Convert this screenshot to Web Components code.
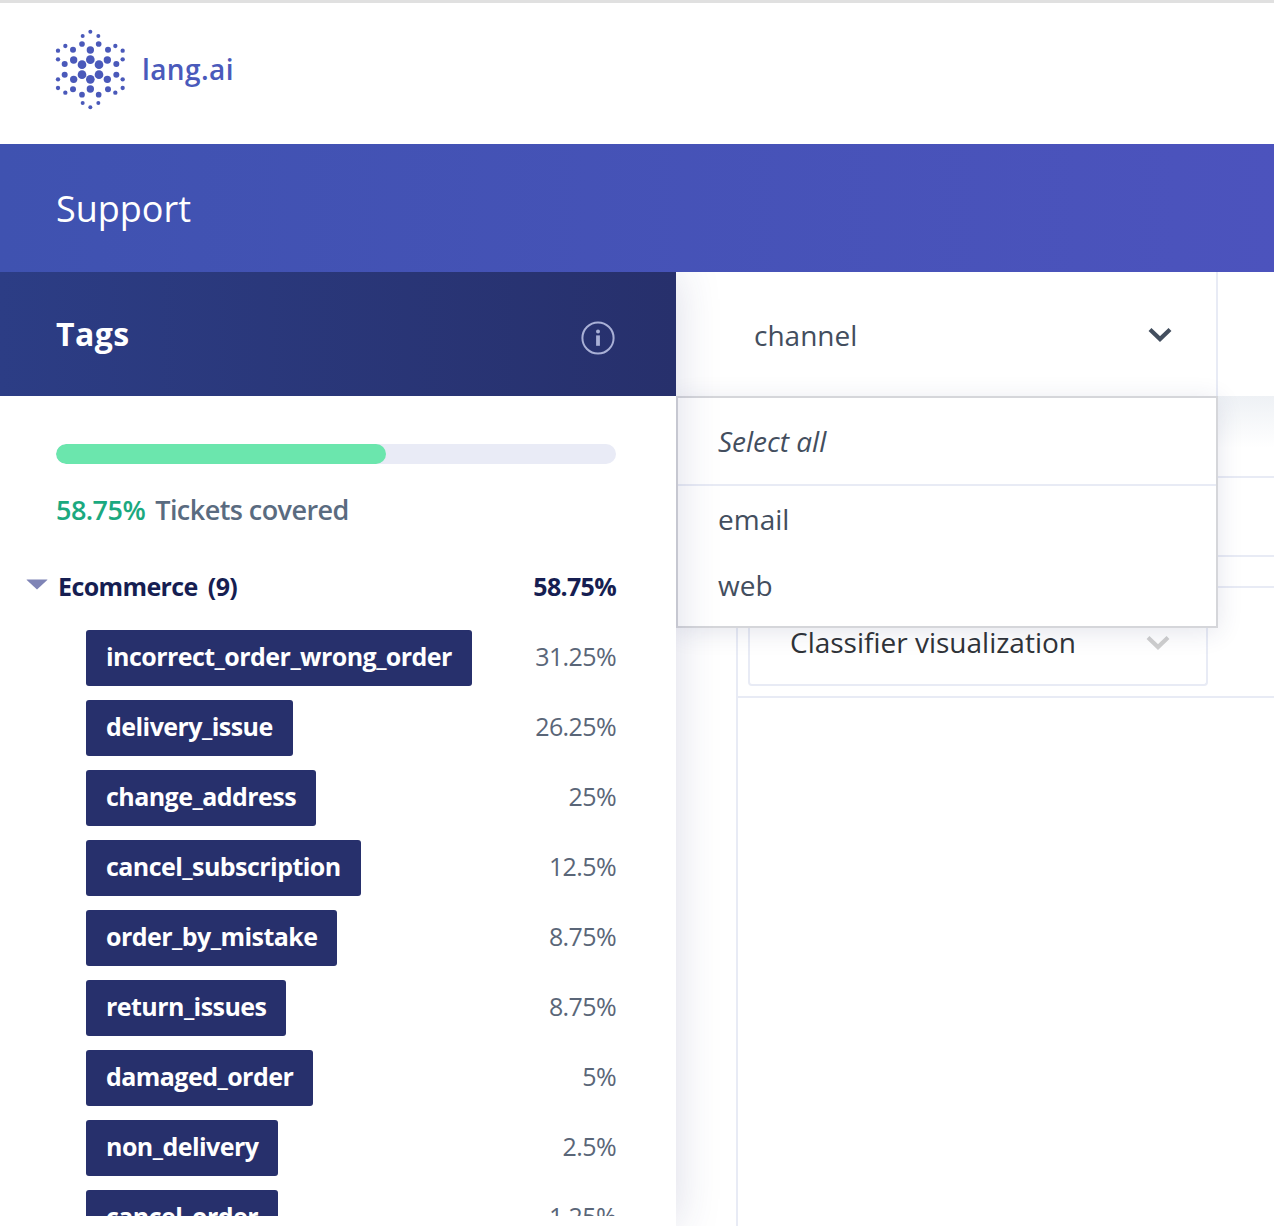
<!DOCTYPE html>
<html><head><meta charset="utf-8">
<style>
html,body{margin:0;padding:0;background:#fff;height:1226px;overflow:hidden;font-family:"Open Sans",sans-serif}
</style></head><body>
<app-page></app-page>
<template id="logo-t"><style>
:host{display:flex;align-items:flex-start;height:124px;padding:17px 0 0 40px;border-top:3px solid #e0e0e0;background:#fff}
svg{width:100px;height:100px;flex:none}
span{font:600 28px/40px "Open Sans",sans-serif;color:#4a5abb;margin:29px 0 0 2px;letter-spacing:.4px}
</style><svg viewBox="0 0 300 300" fill="#4a59ba" id="s"></svg><span>lang.ai</span></template>
<template id="tag-t"><style>
:host{display:flex;justify-content:space-between;align-items:center;height:56px;margin-bottom:14px;padding-left:86px}
b{display:block;background:#27306c;color:#fff;border-radius:3px;font:700 25px/52px "Open Sans",sans-serif;padding:0 20px 4px;letter-spacing:-.55px}
span{font:400 25px/52px "Open Sans",sans-serif;color:#5a6678;letter-spacing:-.6px;padding-bottom:4px}
</style><b><slot></slot></b><span id="p"></span></template>
<template id="side-t"><style>
:host{display:block;width:676px;position:relative;z-index:5;background:#fff;box-shadow:0 0 42px rgba(40,50,110,.17);height:954px}
.h{height:124px;background:linear-gradient(90deg,#2c3d85,#27306c);display:flex;align-items:center;justify-content:space-between;padding:0 61px 0 56px;box-sizing:border-box}
h2{margin:0;font:700 32px "Open Sans",sans-serif;color:#fff;letter-spacing:.4px;position:relative;top:-1px}
svg{width:34px;height:34px;position:relative;top:4px}
.c{height:820px;overflow:hidden;padding:48px 60px 0 0;box-sizing:border-box;position:relative}
.bar{margin-left:56px;height:20px;background:#e9ebf6;border-radius:10px;overflow:hidden}
.bar i{display:block;width:330px;height:20px;background:#6be6ad;border-radius:10px}
.cov{margin:29px 0 0 56px;font:600 27px/33px "Open Sans",sans-serif;color:#5a6b80;letter-spacing:-.55px;white-space:nowrap}
.cov em{font-style:normal;color:#1ba97f;margin-right:10px}
.g{display:flex;align-items:center;height:40px;margin:40px 0 24px 0;position:relative}
.g svg{width:22px;height:11px;margin-left:26px;top:-2px;flex:none}
.g b{font:700 25px "Open Sans",sans-serif;color:#161e52;margin-left:10px;letter-spacing:-.6px}
.g b+b{margin-left:10px}
.g span{margin-left:auto;font:700 25px "Open Sans",sans-serif;color:#161e52;letter-spacing:-.7px}
</style>
<div class="h"><h2>Tags</h2><svg viewBox="0 0 34 34"><circle cx="17" cy="17" r="15.6" fill="none" stroke="#a9b0d6" stroke-width="2"/><circle cx="17" cy="10.6" r="2" fill="#a9b0d6"/><rect x="15.1" y="14.4" width="3.8" height="10.4" fill="#a9b0d6"/></svg></div>
<div class="c"><div class="bar"><i></i></div>
<div class="cov"><em>58.75%</em>Tickets covered</div>
<div class="g"><svg viewBox="0 0 22 11"><path d="M1 .5H21Q21.8.5 21.3 1.1L11 10.6.7 1.1Q.2.5 1 .5Z" fill="#7f84b6"/></svg><b>Ecommerce</b><b>(9)</b><span>58.75%</span></div>
<slot></slot></div></template>
<template id="drop-t"><style>
:host{display:block;width:542px;height:124px;box-sizing:border-box;background:#fff;border-right:2px solid #e8ebf5;position:relative;z-index:3}
.h{height:124px;display:flex;align-items:center;justify-content:space-between;padding:0 44px 0 78px;box-sizing:border-box;font:400 28px "Open Sans",sans-serif;color:#434e5e}
.h span{position:relative;top:1px}
svg{width:24px;height:15px}
.m{position:absolute;left:0;top:124px;width:542px;height:232px;box-sizing:border-box;background:#fff;border:2px solid #d5d6da;box-shadow:0 4px 24px rgba(40,50,110,.12);font:400 28px "Open Sans",sans-serif;color:#434e5e}
.a{height:88px;border-bottom:2px solid #e8ebf5;display:flex;align-items:center;padding:0 0 0 40px;font-style:italic;box-sizing:border-box}
.o{height:66px;display:flex;align-items:center;padding-left:40px}
</style>
<div class="h"><span>channel</span><svg viewBox="0 0 24 15"><path d="M2 2.5 12 12 22 2.5" fill="none" stroke="#434e5e" stroke-width="4.2"/></svg></div>
<div class="m"><div class="a">Select all</div><div class="o">email</div><div class="o">web</div></div></template>
<template id="panel-t"><style>
:host{display:block;flex:1;position:relative;min-width:0}
.w{margin-left:60px;border-left:2px solid #e8ebf5;height:830px}
.l{border-bottom:2px solid #e8ebf5;box-sizing:border-box}
.t{background:linear-gradient(#eef1f5,#fff 52px)}
.box{width:460px;height:98px;margin-left:10px;box-sizing:border-box;border:2px solid #e8ebf5;border-top:0;border-radius:0 0 4px 4px;display:flex;align-items:center;justify-content:space-between;padding:0 36px 0 40px;font:400 28px "Open Sans",sans-serif;color:#2f3338}
.box span{position:relative;top:6px}
svg{width:24px;height:15px;position:relative;top:6px}
</style>
<slot></slot>
<div class="w"><div class="l t" style="height:82px"></div><div class="l" style="height:79px"></div><div class="l" style="height:31px"></div>
<div class="box"><span>Classifier visualization</span><svg viewBox="0 0 24 15"><path d="M2 2.5 12 12 22 2.5" fill="none" stroke="#cfcfcf" stroke-width="4.2"/></svg></div>
<div class="l" style="height:12px"></div></div></template>
<template id="page-t"><style>
:host{display:block;height:1226px;overflow:hidden;background:#fff}
.b{height:128px;background:linear-gradient(90deg,#3f52b0,#4c53bd);display:flex;align-items:center;padding-left:56px;font:400 36px "Open Sans",sans-serif;color:#fff;position:relative;z-index:9}
.r{display:flex;height:954px}
</style>
<lang-logo></lang-logo>
<div class="b">Support</div>
<div class="r"><tag-side>
<tag-row p="31.25%">incorrect_order_wrong_order</tag-row>
<tag-row p="26.25%">delivery_issue</tag-row>
<tag-row p="25%">change_address</tag-row>
<tag-row p="12.5%">cancel_subscription</tag-row>
<tag-row p="8.75%">order_by_mistake</tag-row>
<tag-row p="8.75%">return_issues</tag-row>
<tag-row p="5%">damaged_order</tag-row>
<tag-row p="2.5%">non_delivery</tag-row>
<tag-row p="1.25%">cancel_order</tag-row>
</tag-side><right-panel><channel-drop></channel-drop></right-panel></div></template>
<script>
const mk=(n,t,f)=>customElements.define(n,class extends HTMLElement{constructor(){super();const r=this.attachShadow({mode:'open'});r.appendChild(document.getElementById(t).content.cloneNode(true))}connectedCallback(){f&&f(this.shadowRoot,this)}});
const dots=[[151,35,6],[128,48,6],[175,48,6],[126,72,8.5],[176,72,8.5],[151,90,11],[99,89,9],[204,89,9],[76,78,6.5],[226,78,6.5],[54,92,6.5],[248,92,6.5],[54,118,6.5],[248,118,6.5],[101,120,11],[202,120,11],[74,132,9],[229,132,9],[151,119,13],[126,134,13],[177,134,13],[126,164,13],[177,164,13],[151,178,13],[101,178,11],[202,178,11],[74,164,9],[229,164,9],[54,178,6.5],[248,178,6.5],[54,204,6.5],[248,204,6.5],[99,208,9],[204,208,9],[76,218,6.5],[226,218,6.5],[151,207,11],[126,224,8.5],[176,224,8.5],[128,249,6],[175,249,6],[151,262,6]];
mk('lang-logo','logo-t',r=>{r.getElementById('s').innerHTML=dots.map(d=>`<circle cx="${d[0]}" cy="${d[1]}" r="${d[2]}"/>`).join('')});
mk('tag-row','tag-t',(r,h)=>{r.getElementById('p').textContent=h.getAttribute('p')});
mk('tag-side','side-t');mk('channel-drop','drop-t');mk('right-panel','panel-t');mk('app-page','page-t');
</script></body></html>
